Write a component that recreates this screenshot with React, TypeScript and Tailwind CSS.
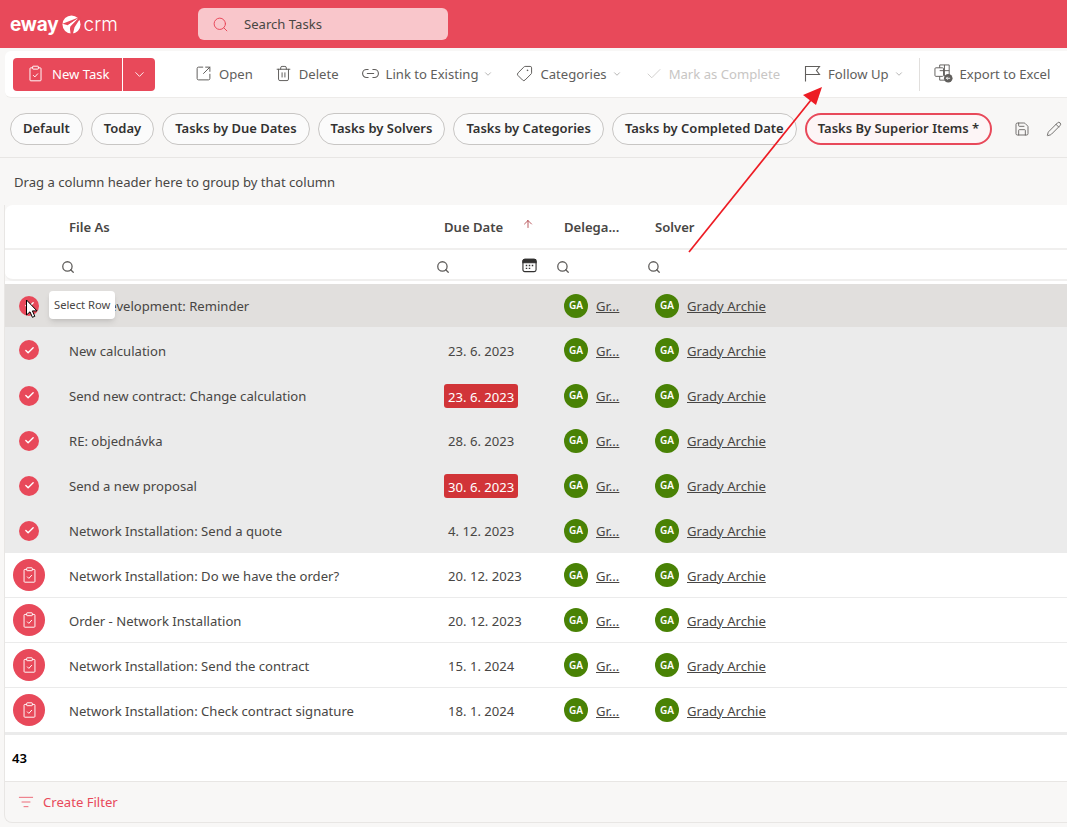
import React from "react";
import { Search, SquareArrowOutUpRight, Trash2, Link2, ChevronDown, Tag, Check, Save, Pencil, ArrowUp, ListFilter } from "lucide-react";

const Clipboard = ({ className = "" }: { className?: string }) => (
  <svg viewBox="0 0 16 20" className={className} fill="none" stroke="currentColor" strokeWidth="1.2">
    <path d="M4.5 3H2.2A1 1 0 0 0 1.2 4v14a1 1 0 0 0 1 1h11.6a1 1 0 0 0 1-1V4a1 1 0 0 0-1-1h-2.3" />
    <rect x="4.5" y="1" width="7" height="3.6" rx="0.6" />
    <path d="M5 12l2.2 2.2L11 10" />
  </svg>
);

const Logo = () => (
  <div className="flex items-center text-white">
    <span className="text-[19px] font-bold leading-none tracking-[-0.2px] font-['Inter',sans-serif]">eway</span>
    <svg viewBox="0 0 20 20" className="w-[19px] h-[19px] ml-[3px] mr-[3px]">
      <circle cx="10" cy="10" r="9.5" fill="#fff" />
      <path d="M20.5 1.5L0.5 9.2l5.6 1.5L17 3.5 8 12l1.2 8.5 2.2-.2 1.8-7.5z" fill="#e8495a" />
      <path d="M17 3.5L6.1 10.7 7.8 17l1-5z" fill="#fff" />
    </svg>
    <span className="text-[19px] font-light leading-none font-['Inter',sans-serif]">crm</span>
  </div>
);

const Action = ({ icon, label, chevron, disabled, gap = "gap-[7px]" }: { icon: React.ReactNode; label: string; chevron?: boolean; disabled?: boolean; gap?: string }) => (
  <div className={`flex items-center ${gap} ${disabled ? "text-[#c8c6c4]" : "text-[#605e5c]"} ${chevron ? "mr-[1px]" : ""}`}>
    {icon}
    <div className="flex items-center gap-[5px]">
      <span className="mt-[1px]">{label}</span>
      {chevron && <ChevronDown className="w-[10px] h-[10px] text-[#8a8886]" strokeWidth={1.5} />}
    </div>
  </div>
);

const Chip = ({ label, active }: { label: string; active?: boolean }) => (
  <div className={`h-[32px] shrink-0 flex items-center rounded-full text-[13px] font-semibold text-[#323130] whitespace-nowrap ${active ? "px-[11px] border-2 border-[#e8495a] bg-[#fdf5f6]" : "px-[12px] border border-[#c8c6c4] bg-[#fbfbfb]"}`}>
    {label}
  </div>
);

const Avatar = () => (
  <div className="w-[24px] h-[24px] shrink-0 rounded-full bg-[#498205] text-white text-[10px] font-semibold flex items-center justify-center">GA</div>
);

type Row = { name: string; date: string; late?: boolean; selected?: boolean; kind?: "hover" | "second" };
const rows: Row[] = [
  { name: "Web Development: Reminder", date: "", selected: true, kind: "hover" },
  { name: "New calculation", date: "23. 6. 2023", selected: true, kind: "second" },
  { name: "Send new contract: Change calculation", date: "23. 6. 2023", late: true, selected: true },
  { name: "RE: objednávka", date: "28. 6. 2023", selected: true },
  { name: "Send a new proposal", date: "30. 6. 2023", late: true, selected: true },
  { name: "Network Installation: Send a quote", date: "4. 12. 2023", selected: true },
  { name: "Network Installation: Do we have the order?", date: "20. 12. 2023" },
  { name: "Order - Network Installation", date: "20. 12. 2023" },
  { name: "Network Installation: Send the contract", date: "15. 1. 2024" },
  { name: "Network Installation: Check contract signature", date: "18. 1. 2024" },
];

const SearchMini = () => <Search className="w-[14px] h-[14px] -ml-[1px] text-[#605e5c]" strokeWidth={2.2} />;

const rowClass = (r: Row) => {
  if (r.kind === "hover") return "h-[43px] bg-[#e1dfdd]";
  if (r.kind === "second") return "h-[46px] bg-[#ebebeb]";
  if (r.selected) return "h-[45px] bg-[#ebebeb]";
  return "h-[45px] bg-white border-b border-[#ebebeb]";
};

const TableRow = ({ r }: { r: Row }) => {
  const low = !r.selected || r.kind === "second";
  const tx = low ? "mt-[4px]" : "mt-[2px]";
  return (
    <div className={`flex items-center ${rowClass(r)}`}>
      <div className="w-[48px] shrink-0 flex justify-center">
        {r.selected ? (
          <div className="w-[20px] h-[20px] rounded-full bg-[#e8495a] flex items-center justify-center">
            <Check className="w-[11px] h-[11px] text-white" strokeWidth={3} />
          </div>
        ) : (
          <div className="w-[32px] h-[32px] rounded-full bg-[#e8495a] flex items-center justify-center text-white">
            <Clipboard className="w-[13px] h-[16px]" />
          </div>
        )}
      </div>
      <div className={`w-[391px] pl-[16px] ${tx} shrink-0 text-[#484644] whitespace-nowrap`}>{r.name}</div>
      <div className="w-[120px] shrink-0 text-[#484644]">
        {r.date && (
          <span className={r.late ? "inline-block bg-[#d13438] text-white rounded-[3px] px-[4px] pt-[3px] pb-[1px] leading-[20px]" : `inline-block px-[4px] ${tx}`}>{r.date}</span>
        )}
      </div>
      <div className="w-[91px] shrink-0 flex items-center gap-[8px] text-[#484644]">
        <Avatar />
        <span className={`underline ${tx}`}>Gr...</span>
      </div>
      <div className="flex items-center gap-[8px] text-[#484644]">
        <Avatar />
        <span className={`underline ${tx}`}>Grady Archie</span>
      </div>
    </div>
  );
};

export default function App() {
  return (
    <div className="relative w-[1067px] h-[827px] overflow-hidden bg-[#f8f7f6] text-[13.1px] font-['Noto_Sans',sans-serif]">
      <header className="h-[48px] bg-[#e8495a] flex items-center pl-[10px]">
        <div className="w-[188px]"><Logo /></div>
        <div className="w-[250px] h-[32px] bg-[#f9c6cb] rounded-[6px] flex items-center pl-[14px] gap-[15px] text-[#484644]">
          <Search className="w-[17px] h-[17px] text-[#e8495a]" strokeWidth={1.4} />
          <span className="mt-[1px]">Search Tasks</span>
        </div>
      </header>

      <div className="ml-[5px] mt-[3px] h-[47px] bg-white rounded-l-[6px] border-b border-[#edebe9] flex items-center pl-[8px]">
        <div className="w-[142px] h-[33px] rounded-[4px] bg-[#e8495a] text-white flex items-center shrink-0">
          <div className="w-[109px] flex items-center gap-[10px] pl-[16px]">
            <Clipboard className="w-[13px] h-[17px]" />
            <span className="mt-[1px]">New Task</span>
          </div>
          <div className="w-px h-full bg-white" />
          <div className="flex-1 flex justify-center"><ChevronDown className="w-[15px] h-[15px]" strokeWidth={1.4} /></div>
        </div>
        <div className="flex items-center ml-[40px] gap-[22px] whitespace-nowrap">
          <Action icon={<SquareArrowOutUpRight className="w-[17px] h-[17px]" strokeWidth={1.4} />} label="Open" />
          <Action icon={<Trash2 className="w-[17px] h-[17px]" strokeWidth={1.4} />} label="Delete" />
          <Action icon={<Link2 className="w-[19px] h-[19px]" strokeWidth={1.4} />} label="Link to Existing" gap="gap-[6px]" chevron />
          <Action icon={<Tag className="w-[17px] h-[17px] -scale-x-100" strokeWidth={1.4} />} label="Categories" chevron />
          <Action icon={<Check className="w-[18px] h-[18px]" strokeWidth={1.1} />} label="Mark as Complete" gap="gap-[6px]" disabled />
          <div className="ml-[2px]">
            <Action icon={
              <svg viewBox="0 0 17 17" className="w-[17px] h-[17px]" fill="none" stroke="currentColor" strokeWidth="1.1">
                <path d="M1.5 16.5V1.5h14l-3 4 3 4h-14" />
              </svg>
            } label="Follow Up" chevron />
          </div>
          <div className="w-px h-[33px] bg-[#e1dfdd] -mx-[8px]" />
          <Action icon={
            <svg viewBox="0 0 20 20" className="w-[19px] h-[19px]" fill="none" stroke="currentColor" strokeWidth="1">
              <rect x="1" y="4" width="9" height="9" rx="1" />
              <path d="M6 4V1h10v12h-3M6 13v4h6M11 1v12M6 7h10" />
              <circle cx="15" cy="15" r="4.5" fill="#605e5c" stroke="none" />
              <path d="M17 15h-4m1.5-1.5L13 15l1.5 1.5" stroke="#fff" />
            </svg>
          } label="Export to Excel" />
        </div>
      </div>

      <div className="h-[60px] border-b border-[#e8e6e4] flex items-center pl-[10px] gap-[8px] pt-[2px]">
        <Chip label="Default" />
        <Chip label="Today" />
        <Chip label="Tasks by Due Dates" />
        <Chip label="Tasks by Solvers" />
        <Chip label="Tasks by Categories" />
        <Chip label="Tasks by Completed Date" />
        <Chip label="Tasks By Superior Items *" active />
        <Save className="w-[16px] h-[16px] text-[#605e5c] ml-[14px] shrink-0" strokeWidth={1.3} />
        <Pencil className="w-[16px] h-[16px] text-[#605e5c] ml-[8px] shrink-0" strokeWidth={1.3} />
      </div>

      <div className="ml-[5px] h-[47px] flex items-center pl-[9px] pt-[2px] text-[#484644]">Drag a column header here to group by that column</div>

      <div className="ml-[4px] h-[618px] rounded-bl-[8px] border-b border-l border-[#e8e6e4] bg-[#f8f7f6] flex flex-col">
        <div className="bg-white h-[45px] pt-[2px] border-b-2 border-[#f0efee] flex items-center font-semibold text-[#484644] rounded-tl-[8px]">
          <div className="w-[64px] shrink-0" />
          <div className="w-[375px] shrink-0">File As</div>
          <div className="w-[120px] shrink-0 flex items-center">
            <span>Due Date</span>
            <ArrowUp className="w-[12px] h-[12px] ml-[19px] -mt-[6px] text-[#a4262c]" strokeWidth={1.5} />
          </div>
          <div className="w-[91px] shrink-0">Delega...</div>
          <div>Solver</div>
        </div>
        <div className="bg-white h-[31px] border-b-2 border-[#f0efee] flex items-center rounded-bl-[8px]">
          <div className="w-[57px] shrink-0" />
          <div className="w-[375px] shrink-0 mt-[5px]"><SearchMini /></div>
          <div className="w-[120px] shrink-0 flex items-center">
            <div className="mt-[5px]"><SearchMini /></div>
            <svg viewBox="0 0 16 16" className="w-[15px] h-[15px] ml-[72px] mt-[1px] text-[#323130]" fill="none" stroke="currentColor" strokeWidth="1.2">
              <rect x="1" y="1.5" width="14" height="13" rx="2" />
              <path d="M1 3.5a2 2 0 0 1 2-2h10a2 2 0 0 1 2 2V5H1z" fill="currentColor" />
              <path d="M4 8h1.6M7.2 8h1.6M10.4 8H12M4 11h1.6M7.2 11h1.6" strokeWidth="1.4" />
            </svg>
          </div>
          <div className="w-[91px] shrink-0 mt-[5px]"><SearchMini /></div>
          <div className="mt-[5px]"><SearchMini /></div>
        </div>
        <div className="h-[3px] bg-white" />
        {rows.map((r) => <TableRow key={r.name} r={r} />)}
        <div className="bg-white h-[48px] border-t-2 border-[#ebebeb] flex items-center pl-[7px] pt-[2px] font-semibold text-black">43</div>
        <div className="flex-1 border-t border-[#e8e6e4] flex items-center pl-[13px] gap-[9px] text-[#e8495a]">
          <ListFilter className="w-[16px] h-[16px]" strokeWidth={1.2} />
          <span className="mt-[2px]">Create Filter</span>
        </div>
      </div>

      <div className="absolute left-[49px] top-[291px] h-[28px] px-[5px] flex items-center rounded-[4px] bg-white text-[11.2px] text-[#484644] shadow-md">Select Row</div>

      <svg className="absolute inset-0 pointer-events-none" width="1067" height="827">
        <path d="M689 252L811 100" stroke="#ed1c24" strokeWidth="1.7" />
        <path d="M822 87L803 95l13 10z" fill="#ed1c24" />
        <path d="M26.5 300v15l3.5-3.2 2.4 5.5 2.4-1-2.4-5.4h4.6z" fill="#fff" stroke="#000" strokeWidth="1" />
      </svg>
    </div>
  );
}
